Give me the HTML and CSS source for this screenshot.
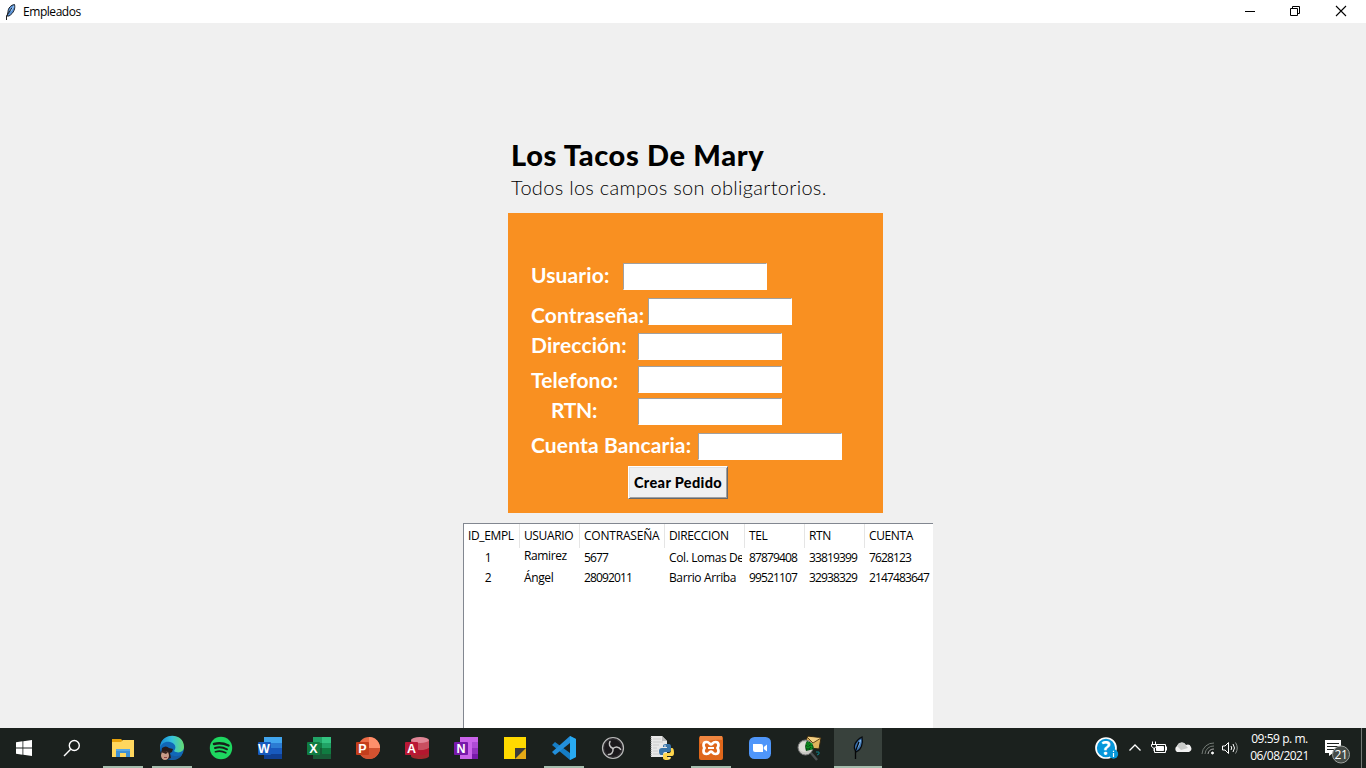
FILE: index.html
```html
<!DOCTYPE html>
<html lang="es">
<head>
<meta charset="utf-8">
<title>Empleados</title>
<link rel="stylesheet" href="styles.css">
</head>
<body>
<div class="desktop">
  <header class="titlebar">
    <svg class="title-icon" width="16" height="18" viewBox="0 0 16 18"><path d="M4 13L5 9C5 5 8 2 11.500 1.500C12.500 5 11 10 6 13Z" fill="#5b93d6" stroke="#1b222c" stroke-width="1"/><path d="M3.500 17V13L9 5" fill="none" stroke="#222" stroke-width="1"/><path d="M8 8L11 3" stroke="#a5cdf6" stroke-width="1"/></svg>
    <span class="title-text">Empleados</span>
    <div class="window-controls">
      <svg width="46" height="22" viewBox="0 0 46 22"><path d="M18 10.500H28" stroke="#000"/></svg>
      <svg width="46" height="22" viewBox="0 0 46 22"><path d="M17.500 7.500H24.500V14.500H17.500ZM19.500 7V5.500H26.500V12.500H25" fill="none" stroke="#000"/></svg>
      <svg width="46" height="22" viewBox="0 0 46 22"><path d="M17 5L27 15M27 5L17 15" stroke="#000" stroke-width="1.100"/></svg>
    </div>
  </header>

  <main class="content">
    <h1 class="heading">Los Tacos De Mary</h1>
    <p class="subtitle">Todos los campos son obligartorios.</p>
    <form class="panel">
      <div class="field field-user"><label>Usuario:</label><input type="text"></div>
      <div class="field field-pass"><label>Contraseña:</label><input type="text"></div>
      <div class="field field-address"><label>Dirección:</label><input type="text"></div>
      <div class="field field-phone"><label>Telefono:</label><input type="text"></div>
      <div class="field field-rtn"><label>RTN:</label><input type="text"></div>
      <div class="field field-bank"><label>Cuenta Bancaria:</label><input type="text"></div>
      <button class="submit" type="button"><span>Crear Pedido</span></button>
    </form>
    <div class="table">
      <div class="row head"><span>ID_EMPL</span><span>USUARIO</span><span class="tight">CONTRASEÑA</span><span>DIRECCION</span><span>TEL</span><span>RTN</span><span>CUENTA</span></div>
      <div class="row"><span class="id">1</span><span class="raised">Ramirez</span><span class="num">5677</span><span>Col. Lomas De</span><span class="num">87879408</span><span class="num">33819399</span><span class="num">7628123</span></div>
      <div class="row"><span class="id">2</span><span>Ángel</span><span class="num">28092011</span><span>Barrio Arriba</span><span class="num">99521107</span><span class="num">32938329</span><span class="num">2147483647</span></div>
    </div>
  </main>

  <footer class="taskbar">
    <div class="task start"><svg width="16" height="16" viewBox="0 0 16 16" fill="#fff"><path d="M0 2.200L6.500 1.300V7.500H0ZM7.300 1.200L16 0V7.500H7.300ZM0 8.400H6.500V14.700L0 13.800ZM7.300 8.400H16V16L7.300 14.800Z"/></svg></div>
    <div class="task start search"><svg width="18" height="18" viewBox="0 0 18 18" fill="none" stroke="#fff" stroke-width="1.400"><circle cx="11.300" cy="6.500" r="5"/><path d="M7.700 10.200L1 17"/></svg></div>
    <div class="task open"><svg width="24" height="24" viewBox="0 0 24 24"><path d="M1 3H10L12 5H22V21H1Z" fill="#e7a20c"/><path d="M1 6H10L12 4H23V21H1Z" fill="#ffd75e"/><path d="M5 21V14Q5 13 6 13H18Q19 13 19 14V21H15V17H9V21Z" fill="#3e91d4"/><path d="M5 13H19V15H5Z" fill="#59a9e4"/></svg></div>
    <div class="task open"><svg width="26" height="26" viewBox="0 0 26 26"><defs><linearGradient id="edge-top"><stop stop-color="#168bd8"/><stop offset=".5" stop-color="#36c2dc"/><stop offset="1" stop-color="#66dc70"/></linearGradient></defs><circle cx="13" cy="13" r="12" fill="#1167b7"/><path d="M1 13C1-3 25-3 25 12C25 17 19 19 15 16C18 12 16 8 11 7C6 6 2 9 1 13Z" fill="url(#edge-top)"/><path d="M9 12C7 20 15 23 23 20C20 25 13 26 8 23C2 18 5 12 9 12Z" fill="#155aa2"/><path d="M3 13Q7 10 10 13L14 14L13 17L11 18L12 23L6 25L2 19Z" fill="#251b1b"/><ellipse cx="6" cy="20.500" rx="4" ry="4.500" fill="#c79b88"/><path d="M2 17Q5 14 9 17L7 19Z" fill="#35231f"/><path d="M5 22.500H8" stroke="#8e4145"/></svg></div>
    <div class="task"><svg width="24" height="24" viewBox="0 0 24 24" fill="none"><circle cx="12" cy="12" r="11.200" fill="#1ed760"/><g stroke="#17201b" stroke-linecap="round"><path d="M5 8Q12 5.800 19.500 9.500" stroke-width="2.500"/><path d="M6 12Q12 10.200 18 13.300" stroke-width="2"/><path d="M6.500 15.700Q12 14.200 16.800 16.800" stroke-width="1.700"/></g></svg></div>
    <div class="task"><svg width="26" height="24" viewBox="0 0 26 24"><path d="M7 1H25V7H7Z" fill="#41a5ee"/><path d="M7 7H25V12H7Z" fill="#2b7cd3"/><path d="M7 12H25V18H7Z" fill="#185abd"/><path d="M7 18H25V23H7Z" fill="#103f91"/><rect x="1" y="6" width="13" height="13" rx="1" fill="#185abd"/><text x="7" y="16.500" class="app-letter">W</text></svg></div>
    <div class="task"><svg width="26" height="24" viewBox="0 0 26 24"><path d="M7 1H16V7H7Z" fill="#21a366"/><path d="M16 1H25V7H16Z" fill="#33c481"/><path d="M7 7H16V12H7Z" fill="#107c41"/><path d="M16 7H25V12H16Z" fill="#21a366"/><path d="M7 12H25V23H7Z" fill="#185c37"/><path d="M16 12H25V18H16Z" fill="#107c41"/><rect x="1" y="6" width="13" height="13" rx="1" fill="#107c41"/><text x="7.500" y="16.500" class="app-letter">X</text></svg></div>
    <div class="task"><svg width="26" height="24" viewBox="0 0 26 24"><circle cx="14" cy="12" r="11" fill="#ed6c47"/><path d="M14 1A11 11 0 0 1 25 12H14Z" fill="#ff8f6b"/><path d="M3 12H25A11 11 0 0 1 3 12" fill="#d35230"/><rect x="1" y="6" width="13" height="13" rx="1" fill="#c43e1c"/><text x="7.500" y="16.500" class="app-letter">P</text></svg></div>
    <div class="task"><svg width="26" height="24" viewBox="0 0 26 24"><path d="M7 4V20C7 24 25 24 25 20V4Z" fill="#a4262c"/><path d="M7 4V13C12 15 21 15 25 12V4Z" fill="#c94f60"/><path d="M7 12C12 15 21 15 25 12V17C20 20 12 19 7 18Z" fill="#b5172f"/><ellipse cx="16" cy="4" rx="9" ry="3" fill="#e18696"/><rect x="1" y="6" width="13" height="13" rx="1" fill="#ba1835"/><text x="7.500" y="16.500" class="app-letter">A</text></svg></div>
    <div class="task"><svg width="26" height="24" viewBox="0 0 26 24"><path d="M7 1H25V23H7Z" fill="#ca64ea"/><path d="M19 6H25V12H19Z" fill="#ae4bd5"/><path d="M19 12H25V18H19Z" fill="#9332bf"/><path d="M19 18H25V23H19Z" fill="#7719aa"/><rect x="1" y="6" width="14" height="13" rx="1" fill="#7719aa"/><text x="8" y="16.500" class="app-letter">N</text></svg></div>
    <div class="task"><svg width="24" height="24" viewBox="0 0 24 24"><path d="M1 1H23V23H1Z" fill="#ffd900"/><path d="M12 23L23 12V23Z" fill="#e5aa16"/><path d="M12 23V12H23Z" fill="#3c3b3a"/></svg></div>
    <div class="task open"><svg width="26" height="26" viewBox="0 0 26 26"><path d="M19 1L25 4V22L19 25L1 10L4 7L19 18Z" fill="#167dc5"/><path d="M19 1V8L4 20L1 17Z" fill="#238fdb"/><path d="M19 1L25 4V22L19 25Z" fill="#28aaf1"/></svg></div>
    <div class="task"><svg width="24" height="24" viewBox="0 0 24 24" fill="none"><circle cx="12" cy="12" r="10.500" fill="#302e31" stroke="#bbb" stroke-width="1.200"/><circle cx="12" cy="12" r="8.500" fill="#1b191c"/><g stroke="#c3c3c3" stroke-width="1.500" stroke-linecap="round"><path d="M12 12.500C8.500 11 7.500 8 9 5.500"/><path d="M12 12.500C8.500 11 7.500 8 9 5.500" transform="rotate(120 12 12.500)"/><path d="M12 12.500C8.500 11 7.500 8 9 5.500" transform="rotate(240 12 12.500)"/></g></svg></div>
    <div class="task"><svg width="26" height="26" viewBox="0 0 26 26"><path d="M2 1H13L18 6V22H2Z" fill="#e8e8e8"/><path d="M13 1V6H18" fill="#bbb"/><path d="M4 4H12M4 7H14M4 10H10M4 13H8M4 16H9M4 19H10" stroke="#ccc"/><path d="M2 2V22" stroke="#777" stroke-dasharray="1 1"/><path d="M14 15V11Q14 9 17 9H20Q22 9 22 12V15Q22 17 19 17H16Q14 17 14 20H12Q10 20 10 16Q10 13 13 13H18V12H14Z" fill="#3974a8"/><path d="M22 13H23Q25 13 25 18Q25 21 23 21H18V22H22Q22 25 18 25Q14 25 14 23V20Q14 18 17 18H20Q22 18 22 15Z" fill="#ffd64c"/><circle cx="16" cy="11" r=".8" fill="#fff"/><circle cx="20" cy="23" r=".8" fill="#fff"/></svg></div>
    <div class="task open"><svg width="26" height="26" viewBox="0 0 26 26"><rect x="1" y="1" width="24" height="24" rx="2" fill="#df671b"/><path d="M2 1H24V5Q12 4 2 9Z" fill="#ee8540"/><path d="M8.500 7Q10.500 7 11.500 8.500Q13 10 14.500 8.500Q15.500 7 17.500 7Q20.500 7 20.500 10Q20.500 11.500 19.500 13Q20.500 14.500 20.500 16Q20.500 19 17.500 19Q15.500 19 14.500 17.500Q13 16 11.500 17.500Q10.500 19 8.500 19Q5.500 19 5.500 16Q5.500 14.500 6.500 13Q5.500 11.500 5.500 10Q5.500 7 8.500 7Z" fill="none" stroke="#fff" stroke-width="2.700"/><path d="M10 13H16" stroke="#fff" stroke-width="2"/></svg></div>
    <div class="task"><svg width="24" height="24" viewBox="0 0 24 24"><rect x="1" y="1" width="22" height="22" rx="5.500" fill="#4f96fa"/><path d="M5 8H13Q15 8 15 10V16H7Q5 16 5 14Z" fill="#fff"/><path d="M15.800 11L19 8.500V15.500L15.800 13Z" fill="#fff"/></svg></div>
    <div class="task"><svg width="26" height="26" viewBox="0 0 26 26"><path d="M10 5L12 1L25 3L23 14L14 13Z" fill="#ddb35b" stroke="#302512"/><path d="M11 2L17 8L25 3" fill="#f3d084" stroke="#634a1b"/><path d="M15 18L21 25" stroke="#4c5052" stroke-width="2.500"/><circle cx="9.500" cy="12.500" r="7.500" fill="#c9c8c4" stroke="#777"/><circle cx="8" cy="12" r="5" fill="#deded8"/><path d="M11 6Q17 7 18 14L10 16Q8 10 11 6Z" fill="#064f14"/><path d="M10 9H17M10 12H17M12 7V15M15 8V15" stroke="#12b929" stroke-dasharray="1.500 1"/><path d="M20 17H23V19L21 20" fill="none" stroke="#108087"/></svg></div>
    <div class="task open active"><svg width="20" height="26" viewBox="0 0 20 26"><path d="M8 17C4 11 8 5 14 2C15.500 9 13 15 8 17Z" fill="#3970ad" stroke="#080c10" stroke-width="1.300"/><path d="M9 13Q12 9 12.500 5" fill="none" stroke="#82b5e6" stroke-width="1.500"/><path d="M7.500 24V16L11 7" fill="none" stroke="#050607" stroke-width="1.300"/></svg></div>
    <div class="tray">
      <svg width="28" height="28" viewBox="-1 0 28 28"><circle cx="11" cy="14" r="10" fill="#0796d9" stroke="#fff" stroke-width="1.700"/><text x="11" y="21" class="help-mark">?</text><circle cx="18.500" cy="20" r="4.700" fill="#0796d9"/><path d="M18.500 19V23M18.500 16.800V18" stroke="#fff" stroke-width="1.200"/></svg>
      <svg width="24" height="24" viewBox="-1 0 24 24"><path d="M6.500 14.500L12 9L17.500 14.500" fill="none" stroke="#fff" stroke-width="1.300"/></svg>
      <svg width="24" height="24" viewBox="0 0 24 24" fill="none" stroke="#fff"><path d="M8.500 12V16.500H19.500V8.500H10M20.500 10.500V14.500"/><path d="M10.500 10.500H17.500V14.500H10.500Z" fill="#fff"/><path d="M6.500 5.500V8M9.500 5.500V8M5.500 8.500H10.500V10.500L8.500 12H7.500L5.500 10.500ZM8 12V15"/></svg>
      <svg width="24" height="24" viewBox="-1 0 24 24"><path d="M6 16A3.500 3.500 0 0 1 6 10A5 5 0 0 1 15 9A3.500 3.500 0 0 1 18 16Z" fill="#f1f1f1"/><path d="M6.500 9A4.500 4.500 0 0 1 14.500 9L17 12L10 14L6 10Z" fill="#c9cbc9"/></svg>
      <svg width="24" height="24" viewBox="-2 0 24 24" fill="none" stroke="#737a75"><path d="M6 18A11.500 11.500 0 0 1 18 7M9 18A8.500 8.500 0 0 1 18 10"/><path d="M12 18A5.500 5.500 0 0 1 18 13" stroke="#aaa"/><circle cx="16.500" cy="17" r="1" fill="#fff" stroke="#fff"/></svg>
      <svg width="24" height="24" viewBox="-1 0 24 24" fill="none" stroke="#fff"><path d="M3.500 10H6L9.500 6.500V17.500L6 14H3.500Z"/><path d="M12 10Q13.500 12 12 14M14 8Q17 12 14 16"/><path d="M16.500 6.500Q20 12 16.500 17.500" stroke="#8e9390"/></svg>
      <div class="clock"><span>09:59 p. m.</span><span class="date">06/08/2021</span></div>
      <svg class="notice" width="30" height="32" viewBox="0 0 30 32"><path d="M1 8H17V21H9L5 24V21H1Z" fill="#fff"/><path d="M3 11.500H15M3 14.500H15M3 17.500H10" stroke="#1b211e"/><circle cx="17" cy="22.500" r="8.500" fill="#454b47" stroke="#9ca09d"/><text x="17" y="27" class="notice-count">21</text></svg>
      <i class="desktop-edge"></i>
    </div>
  </footer>
</div>
</body>
</html>
```
FILE: styles.css
```css
* { box-sizing: border-box; }
body { margin: 0; background: #f0f0f0; color: #000; font-family: "Open Sans", "Noto Sans", sans-serif; overflow: hidden; }
svg { display: block; flex: none; }
.desktop { width: 1366px; height: 768px; display: flex; flex-direction: column; }
.titlebar { height: 23px; flex: none; display: flex; align-items: center; background: #fff; padding-left: 3px; }
.title-icon { margin-right: 4px; }
.title-text { font-size: 12px; line-height: 20px; letter-spacing: -.45px; }
.window-controls { display: flex; margin-left: auto; padding-right: 1px; }
.content { flex: 1; min-height: 0; padding: 112px 0 0 463px; overflow: hidden; }
.heading { margin: 0 0 0 48px; font: 900 29px/40px Lato, sans-serif; letter-spacing: .65px; white-space: nowrap; }
.subtitle { margin: 0 0 0 48px; font: 300 20px/24px Lato, sans-serif; letter-spacing: .3px; white-space: nowrap; }
.panel { margin: 14px 0 0 45px; width: 375px; height: 300px; padding: 50px 0 0 22px; background: #f99021; }
.field { display: flex; width: 340px; height: 28px; }
.field label { padding-left: 1px; color: #fff; font: bold 21px/28px Lato, sans-serif; letter-spacing: .12px; white-space: nowrap; flex: none; }
.field input { width: 144px; height: 27px; padding: 0; border: 1px solid; border-color: #a0a0a0 #fff #fff #a0a0a0; border-radius: 0; background: #fff; flex: none; }
.field-user label { width: 93px; margin-top: -2px; }
.field-pass { margin-top: 7px; }
.field-pass label { width: 118px; padding-top: 3px; }
.field-address { margin-top: 7px; }
.field-address label { width: 108px; margin-top: -2px; }
.field-phone { margin-top: 5px; }
.field-phone label, .field-rtn label { width: 108px; }
.field-rtn { margin-top: 4px; }
.field-rtn label { padding-left: 21px; margin-top: -2px; letter-spacing: -.3px; }
.field-bank { margin-top: 7px; }
.field-bank label { width: 168px; margin-top: -2px; }
.submit { display: block; width: 100px; height: 33px; margin: 5px 0 0 98px; padding: 0; border: 1px solid; border-color: #fff #696969 #696969 #fff; box-shadow: inset 1px 1px #e3e3e3, inset -1px -1px #a0a0a0; background: #f0f0f0; font: 900 14.500px/29px Lato, sans-serif; letter-spacing: .35px; color: #000; white-space: nowrap; }
.table { width: 470px; height: 240px; margin-top: 10px; border: solid #828790; border-width: 1px 0 0 1px; background: #fff; font-size: 12px; line-height: 20px; letter-spacing: -.38px; }
.row { display: grid; grid-template-columns: 56px 60px 85px 80px 60px 60px 68px; height: 20px; }
.row span { padding-left: 4px; overflow: hidden; white-space: nowrap; border-right: 3px solid transparent; }
.row .num { letter-spacing: -.85px; overflow: visible; }
.row .id { text-align: center; padding-left: 0; border: 0; padding-right: 8px; }
.row .raised { position: relative; top: -2px; }
.head { height: 24px; line-height: 24px; }
.head span { border-right: 1px solid #e5e5e5; }
.head span:last-child { border: 0; }
.head .tight { letter-spacing: -.2px; }
.taskbar { height: 40px; flex: none; display: flex; background: #1b211e; color: #fff; }
.task { width: 49px; display: flex; align-items: center; justify-content: center; }
.start { width: 48px; }
.search { margin-right: 2px; }
.open { background: linear-gradient(#a5bdad, #a5bdad) center bottom / 40px 2px no-repeat; }
.active { background: linear-gradient(#a5bdad, #a5bdad) center bottom / 48px 2px no-repeat, #38413c; width: 48px; margin-left: 1px; }
.app-letter { fill: #fff; font: bold 12.500px "Liberation Sans", sans-serif; text-anchor: middle; }
.tray { display: flex; align-items: center; margin-left: auto; height: 40px; }
.help-mark { fill: #fff; font: bold 19px "Open Sans", sans-serif; text-anchor: middle; }
.clock { width: 75px; display: flex; flex-direction: column; align-items: center; font-size: 12px; line-height: 17px; letter-spacing: -.45px; padding-bottom: 2px; white-space: nowrap; }
.date { letter-spacing: -.5px; }
.notice { margin-left: 7px; }
.notice-count { fill: #fff; font: 12px "Open Sans", sans-serif; text-anchor: middle; letter-spacing: -.3px; }
.desktop-edge { width: 1px; height: 40px; background: #747875; margin: 0 4px 0 7px; }
```
